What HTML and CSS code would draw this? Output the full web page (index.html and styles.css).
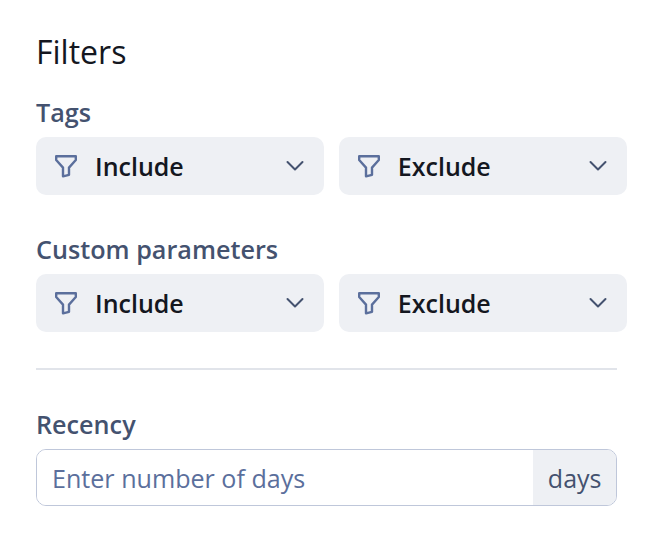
FILE: index.html
```html
<!DOCTYPE html>
<html lang="en">
<head>
  <meta charset="UTF-8" />
  <title>Filters</title>
  <link rel="stylesheet" href="styles.css">
</head>
<body>
  <svg class="defs" width="0" height="0">
    <symbol id="funnel" viewBox="0 0 24 24">
      <path d="M2.200 2.200h19.600v3.800l-6.800 7.600v7.200l-6 1.500v-8.700L2.200 6z" fill="none" stroke="currentColor" stroke-width="2.400" stroke-linejoin="round"/>
    </symbol>
    <symbol id="chevron" viewBox="0 0 18 12">
      <path d="M1.500 2l7.500 7.500L16.500 2" fill="none" stroke="currentColor" stroke-width="2" stroke-linecap="round" stroke-linejoin="round"/>
    </symbol>
  </svg>

  <div class="panel">
    <h1>Filters</h1>

    <div class="group">
      <div class="label">Tags</div>
      <div class="selects">
        <div class="select">
          <svg class="funnel"><use href="#funnel"/></svg>
          <span class="select-text">Include</span>
          <svg class="chevron"><use href="#chevron"/></svg>
        </div>
        <div class="select">
          <svg class="funnel"><use href="#funnel"/></svg>
          <span class="select-text">Exclude</span>
          <svg class="chevron"><use href="#chevron"/></svg>
        </div>
      </div>
    </div>

    <div class="group">
      <div class="label">Custom parameters</div>
      <div class="selects">
        <div class="select">
          <svg class="funnel"><use href="#funnel"/></svg>
          <span class="select-text">Include</span>
          <svg class="chevron"><use href="#chevron"/></svg>
        </div>
        <div class="select">
          <svg class="funnel"><use href="#funnel"/></svg>
          <span class="select-text">Exclude</span>
          <svg class="chevron"><use href="#chevron"/></svg>
        </div>
      </div>
    </div>

    <hr class="divider" />

    <div class="label">Recency</div>
    <div class="input-group">
      <input class="input" type="text" placeholder="Enter number of days" />
      <span class="addon">days</span>
    </div>
  </div>
</body>
</html>
```

FILE: styles.css
```css
* {
  box-sizing: border-box;
  margin: 0;
  padding: 0;
  font-family: 'Open Sans', sans-serif;
}

:root {
  --ink: #14171f;
  --slate: #44526f;
  --blue: #5b6f9c;
  --fill: #eef0f4;
  --line: #bfc7da;
}

body {
  background-color: #ffffff;
  color: var(--ink);
}

.defs {
  display: block;
}

.panel {
  width: 581px;
  margin-left: 36px;
  padding-top: 30px;
}

h1 {
  font-size: 32px;
  line-height: 44px;
  font-weight: 400;
  margin-bottom: 22px;
}

.label {
  font-size: 25.2px;
  line-height: 32px;
  font-weight: 600;
  color: var(--slate);
  margin-bottom: 9px;
}

.group + .group {
  margin-top: 38px;
}

.selects {
  display: flex;
  gap: 14.6px;
  width: 591px;
}

.select {
  display: flex;
  flex: 1;
  align-items: center;
  height: 58px;
  padding: 0 20.5px 0 18px;
  background-color: var(--fill);
  border-radius: 10px;
}

.funnel {
  width: 24px;
  height: 24px;
  color: var(--blue);
  flex-shrink: 0;
}

.select-text {
  flex: 1;
  margin-left: 17px;
  font-size: 25px;
  font-weight: 600;
}

.chevron {
  width: 18px;
  height: 12px;
  color: var(--slate);
}

.divider {
  border: none;
  border-top: 2px solid #e1e4ea;
  margin-top: 36px;
  margin-bottom: 38px;
}

.input-group {
  display: flex;
  height: 57px;
  border: 1px solid var(--line);
  border-radius: 10px;
  overflow: hidden;
}

.input {
  flex: 1;
  min-width: 0;
  border: none;
  outline: none;
  padding-left: 15px;
  font-size: 25.1px;
  color: var(--ink);
}

.input::placeholder {
  color: var(--blue);
  opacity: 1;
}

.addon {
  display: flex;
  align-items: center;
  padding: 0 14.5px;
  background-color: var(--fill);
  color: var(--slate);
  font-size: 25px;
}
```
